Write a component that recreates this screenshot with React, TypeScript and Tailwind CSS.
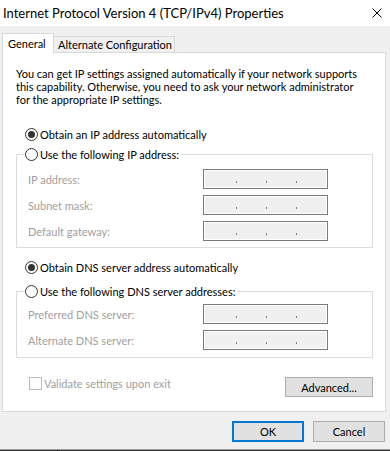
import React from "react";

const FONT = { fontFamily: 'Lato, "Noto Sans", sans-serif' };

function Radio({ checked }: { checked?: boolean }) {
  return (
    <span className="flex h-[13px] w-[13px] shrink-0 items-center justify-center rounded-full border border-[#333333] bg-white">
      {checked && <span className="h-[7px] w-[7px] rounded-full bg-[#333333]" />}
    </span>
  );
}

function IpBox() {
  return (
    <div className="flex h-[20px] w-[125px] items-end gap-[29px] border border-[#7a7a7a] bg-[#f0f0f0] pb-[5px] pl-[32px] shadow-[inset_0_0_0_1px_#ffffff]">
      <span className="h-[2px] w-[1px] bg-[#7c7c9c]" />
      <span className="h-[2px] w-[1px] bg-[#7c7c9c]" />
      <span className="h-[2px] w-[1px] bg-[#7c7c9c]" />
    </div>
  );
}

function IpRow({ label }: { label: string }) {
  return (
    <div className="flex h-[20px] items-center pl-[3px]">
      <span className="w-[175px] text-[#a0a0a0]">{label}</span>
      <IpBox />
    </div>
  );
}

function Group({ title, rows, top, bottom }: { title: string; rows: string[]; top: string; bottom: string }) {
  return (
    <fieldset className={`ml-[13px] w-[357px] border border-[#dcdcdc] px-[8px] ${top} ${bottom}`}>
      <legend className="flex h-[16px] items-center gap-[2px] pr-[2px]">
        <Radio />
        <span>{title}</span>
      </legend>
      <div className="flex flex-col gap-[6px]">
        {rows.map((r) => (
          <IpRow key={r} label={r} />
        ))}
      </div>
    </fieldset>
  );
}

export default function App() {
  return (
    <div className="flex h-[451px] w-[390px] flex-col overflow-hidden whitespace-nowrap bg-[#f0f0f0] text-[11px] leading-[13px] text-black" style={FONT}>
      {/* title bar */}
      <div className="flex h-[26px] shrink-0 items-center justify-between bg-white pl-[3px] pr-[8px]">
        <span className="text-[13px] leading-[20px]">Internet Protocol Version 4 (TCP/IPv4) Properties</span>
        <svg width="10" height="10" viewBox="0 0 10 10">
          <path d="M0.5 0.5 L9.5 9.5 M9.5 0.5 L0.5 9.5" stroke="#000" strokeWidth="1" />
        </svg>
      </div>

      {/* tabs */}
      <div className="flex h-[26px] shrink-0 items-end pl-[2px]">
        <div className="relative z-10 -mb-[1px] flex h-[20px] w-[52px] items-center border-x border-t border-[#d9d9d9] bg-white pb-[1px] pl-[5px]">
          General
        </div>
        <div className="flex h-[16px] w-[121px] items-center border-r border-t border-[#d9d9d9] pl-[4px]">
          Alternate Configuration
        </div>
      </div>

      {/* panel */}
      <div className="ml-[2px] flex h-[360px] w-[384px] shrink-0 flex-col border border-[#d9d9d9] bg-white">
        <p className="pl-[13px] pt-[14px]">
          You can get IP settings assigned automatically if your network supports
          <br />
          this capability. Otherwise, you need to ask your network administrator
          <br />
          for the appropriate IP settings.
        </p>

        <div className="ml-[22px] mt-[20px] flex h-[16px] items-center gap-[2px]">
          <Radio checked />
          <span>Obtain an IP address automatically</span>
        </div>

        <Group title="Use the following IP address:" rows={["IP address:", "Subnet mask:", "Default gateway:"]} top="mt-[4px] pt-[7px]" bottom="pb-[6px]" />

        <div className="ml-[22px] mt-[11px] flex h-[16px] items-center gap-[2px]">
          <Radio checked />
          <span>Obtain DNS server address automatically</span>
        </div>

        <Group title="Use the following DNS server addresses:" rows={["Preferred DNS server:", "Alternate DNS server:"]} top="mt-[8px] pt-[5px]" bottom="pb-[7px]" />

        <div className="mt-[19px] flex items-start justify-between pl-[26px] pr-[12px]">
          <div className="flex h-[13px] items-center gap-[2px]">
            <span className="h-[13px] w-[13px] border border-[#bcbcbc] bg-white" />
            <span className="text-[#a0a0a0]">Validate settings upon exit</span>
          </div>
          <button className="h-[20px] w-[88px] border border-[#adadad] bg-[#e1e1e1]">Advanced...</button>
        </div>
      </div>

      {/* buttons */}
      <div className="flex h-[37px] shrink-0 items-start justify-end gap-[9px] pr-[5px] pt-[9px]">
        <button className="h-[21px] w-[72px] border-2 border-[#0078d7] bg-[#e1e1e1]">OK</button>
        <button className="h-[21px] w-[72px] border border-[#adadad] bg-[#e1e1e1]">Cancel</button>
      </div>

      {/* taskbar edge */}
      <div className="flex h-[3px] shrink-0 flex-col">
        <div className="h-[1px] bg-[#9a9a9a]" />
        <div className="flex h-[2px]">
          <div className="w-[57px] bg-[#3a3a3a]" />
          <div className="w-[1px] bg-black" />
          <div className="flex-1 bg-[#3a3a3a]" />
        </div>
      </div>
    </div>
  );
}
